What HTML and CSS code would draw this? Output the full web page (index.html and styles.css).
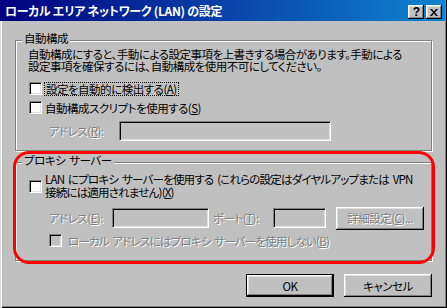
FILE: index.html
```html
<!DOCTYPE html>
<html lang="ja">
<head>
    <meta charset="UTF-8">
    <title>ローカル エリア ネットワーク (LAN) の設定</title>
    <link rel="stylesheet" href="styles.css">
</head>
<body>
    <div class="window">
        <div class="titlebar">
            <span class="title">ローカル エリア ネットワーク (LAN) の設定</span>
            <div class="caption-btns">
                <span class="cap help">?</span>
                <span class="cap close">
                    <svg width="8" height="7" viewBox="0 0 8 7"><path d="M0 0h2l2 2.5L6 0h2L5 3.5 8 7H6L4 4.5 2 7H0l3-3.5z" fill="#000"/></svg>
                </span>
            </div>
        </div>

        <div class="content">
            <fieldset class="group auto">
                <legend>自動構成</legend>
                <p class="desc">自動構成にすると、手動による設定事項を上書きする場合があります。手動による<br>設定事項を確保するには、自動構成を使用不可にしてください。</p>
                <label class="check"><span class="box"></span><span class="focus">設定を自動的に検出する(<u>A</u>)</span></label>
                <label class="check"><span class="box"></span><span>自動構成スクリプトを使用する(<u>S</u>)</span></label>
                <div class="field-row script-row">
                    <span class="disabled lbl-script">アドレス(<u>R</u>):</span>
                    <span class="edit edit-script"></span>
                </div>
            </fieldset>

            <fieldset class="group proxy">
                <legend>プロキシ サーバー</legend>
                <label class="check check-lan"><span class="box"></span><span class="lan-text">LAN にプロキシ サーバーを使用する (これらの設定はダイヤルアップまたは VPN<br>接続には適用されません)(<u>X</u>)</span></label>
                <div class="field-row proxy-row">
                    <span class="disabled lbl-addr">アドレス(<u>E</u>):</span>
                    <span class="edit edit-addr"></span>
                    <span class="disabled lbl-port">ポート(<u>T</u>):</span>
                    <span class="edit edit-port"></span>
                    <span class="btn btn-adv disabled">詳細設定(<u>C</u>)...</span>
                </div>
                <label class="check check-local"><span class="box off"></span><span class="disabled local-text">ローカル アドレスにはプロキシ サーバーを使用しない(<u>B</u>)</span></label>
            </fieldset>

            <div class="actions">
                <span class="btn default">OK</span>
                <span class="btn">キャンセル</span>
            </div>
        </div>

        <div class="annotation"></div>
    </div>
</body>
</html>
```

FILE: styles.css
```css
* { box-sizing: border-box; }
body { margin: 0; background: #c0c0c0; font-family: "Noto Sans CJK JP", "Noto Sans", sans-serif; font-size: 11.5px; letter-spacing: -0.5px; word-spacing: 2px; color: #000; font-feature-settings: "palt"; }
u { text-decoration: underline; text-underline-offset: 1px; }

.window { position: relative; width: 447px; height: 308px; background: #c0c0c0; box-shadow: inset 1px 0 #dfdfdf, inset 2px 0 #fff, inset -1px -1px #000, inset -2px -2px #808080; }

.titlebar { height: 21px; margin-right: 2px; display: flex; align-items: center; justify-content: space-between; padding-left: 5px; background: linear-gradient(to right, #000080, #1084d0); }
.title { color: #fff; font-weight: bold; font-size: 12px; letter-spacing: -0.3px; word-spacing: 0; line-height: 14px; white-space: nowrap; }
.caption-btns { display: flex; gap: 2px; margin-right: 3px; margin-top: 3px; }
.cap { width: 16px; height: 14px; display: flex; align-items: center; justify-content: center; background: #c0c0c0; box-shadow: inset -1px -1px #000, inset 1px 1px #fff, inset -2px -2px #808080, inset 2px 2px #dfdfdf; font-family: "Liberation Sans", sans-serif; font-weight: bold; font-size: 12px; letter-spacing: 0; line-height: 12px; }
.cap.help { padding-left: 1px; }

.content { padding: 12px 15px 0 15px; }

.group { margin: 0; padding: 0; border: 1px solid #808080; box-shadow: inset 1px 1px #fff, 1px 1px #fff; min-width: 0; }
.group legend { margin-left: 6px; padding: 0 2px 4px; line-height: 11px; background: #c0c0c0; white-space: nowrap; }
.group.proxy { margin-top: 4px; padding-bottom: 10px; }
.group.auto { padding-bottom: 9px; }

.desc { margin: 0 0 0 12px; line-height: 12px; white-space: nowrap; }

.check { display: flex; align-items: center; height: 19px; margin-left: 13px; white-space: nowrap; }
.auto .check:first-of-type { margin-top: 7px; }
.box { width: 13px; height: 13px; flex: none; margin-right: 3px; background: #fff; border-top: 1px solid #808080; border-left: 1px solid #808080; border-bottom: 1px solid #fff; border-right: 1px solid #fff; box-shadow: inset 1px 1px #000, inset -1px -1px #dfdfdf; }
.box.off { background: #c0c0c0; }
.focus { line-height: 12px; padding: 0 1px; outline: 1px dotted #000; }

.disabled { color: #808080; text-shadow: 1px 1px 0 #fff; }

.field-row { display: flex; align-items: center; white-space: nowrap; }
.script-row { margin: 4px 0 0 33px; }
.lbl-script { width: 70px; }
.edit { height: 20px; flex: none; background: #c0c0c0; border-top: 1px solid #808080; border-left: 1px solid #808080; border-bottom: 1px solid #fff; border-right: 1px solid #fff; box-shadow: inset 1px 1px #000, inset -1px -1px #dfdfdf; }
.edit-script { width: 212px; }

.check-lan { height: auto; margin-top: 3px; }
.lan-text { line-height: 13px; letter-spacing: -0.8px; }
.proxy-row { margin: 8px 0 0 33px; height: 22px; }
.lbl-addr { width: 63px; flex: none; }
.edit-addr { width: 97px; }
.lbl-port { width: 60px; flex: none; margin-left: 4px; }
.edit-port { width: 53px; }
.btn-adv { margin-left: 10px; width: 88px; height: 22px; flex: none; }
.check-local { margin: 2px 0 0 33px; }
.check-local .box { margin-right: 6px; }
.local-text { letter-spacing: -0.8px; }

.btn { display: flex; align-items: center; justify-content: center; width: 88px; height: 23px; background: #c0c0c0; box-shadow: inset -1px -1px #000, inset 1px 1px #fff, inset -2px -2px #808080, inset 2px 2px #dfdfdf; white-space: nowrap; }
.btn.default { box-shadow: inset 0 0 0 1px #000, inset -2px -2px #000, inset 2px 2px #fff, inset -3px -3px #808080, inset 3px 3px #dfdfdf; }

.actions { display: flex; justify-content: flex-end; gap: 10px; margin-top: 13px; }

.annotation { position: absolute; left: 13px; top: 151px; width: 422px; height: 113px; border: 3px solid #f00; border-radius: 16px; pointer-events: none; }
```
